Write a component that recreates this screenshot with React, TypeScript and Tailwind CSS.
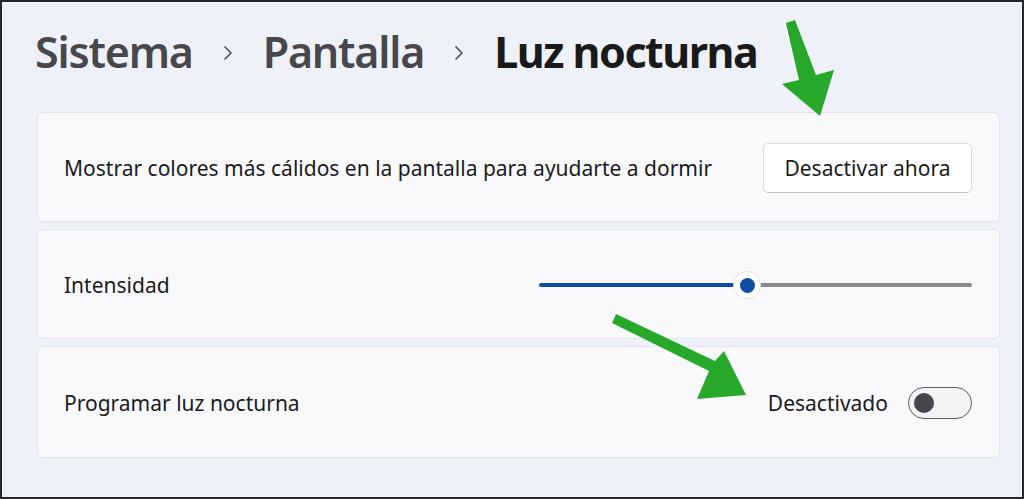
import React from "react";

function Chevron() {
  return (
    <svg width="10" height="16" viewBox="0 0 10 16" className="mx-[30px] mt-[3px]">
      <path d="M2 2 L8 8 L2 14" fill="none" stroke="#55555a" strokeWidth="1.7" strokeLinecap="round" strokeLinejoin="round" />
    </svg>
  );
}

function Card({ children, className = "" }: { children: React.ReactNode; className?: string }) {
  return (
    <div
      className={`flex items-center justify-between rounded-[6px] border border-[#e1e4ea] bg-[#f9f9fb] pl-[26px] pr-[27px] ${className}`}
    >
      {children}
    </div>
  );
}

export default function App() {
  return (
    <div
      className="relative h-[499px] w-[1024px] overflow-hidden border-2 border-[#26272b] bg-[#eef1f8] text-[#1b1b1b]"
      style={{ fontFamily: '"Noto Sans", "Open Sans", sans-serif' }}
    >
      {/* Breadcrumb */}
      <div className="flex h-[100px] items-center pl-[33px] pb-[2px] text-[43px] font-semibold leading-none tracking-[-1.2px]">
        <span className="text-[#47474c]">Sistema</span>
        <Chevron />
        <span className="text-[#47474c]">Pantalla</span>
        <Chevron />
        <span className="font-bold tracking-[-1.5px] text-[#1a1a1a]">Luz nocturna</span>
      </div>

      {/* Settings cards */}
      <div className="ml-[35px] mr-[22px] mt-[10px] flex flex-col gap-[7px] text-[21px]">
        <Card className="h-[110px]">
          <span className="pt-[3px]">Mostrar colores más cálidos en la pantalla para ayudarte a dormir</span>
          <button
            type="button"
            className="mt-[2px] h-[50px] w-[209px] rounded-[5px] border border-[#dcdcdc] border-b-[#c4c4c4] bg-white pt-[2px] text-[21px] text-[#1b1b1b]"
          >
            Desactivar ahora
          </button>
        </Card>

        <Card className="h-[110px]">
          <span className="pt-[3px]">Intensidad</span>
          <div className="relative mt-[2px] flex h-[28px] w-[433px] items-center">
            <div className="h-[4px] w-[208px] rounded-full bg-[#0f4ea6]" />
            <div className="h-[4px] flex-1 rounded-full bg-[#8a8a8a]" />
            <div className="absolute left-[194px] top-0 flex h-[28px] w-[28px] items-center justify-center rounded-full border border-[#e2e2e2] bg-white">
              <div className="h-[15px] w-[15px] rounded-full bg-[#0f4ea6]" />
            </div>
          </div>
        </Card>

        <Card className="h-[112px]">
          <span className="pt-[3px]">Programar luz nocturna</span>
          <div className="flex items-center gap-[20px]">
            <span className="pt-[3px]">Desactivado</span>
            <div className="mt-[2px] flex h-[32px] w-[64px] items-center rounded-full border-[1.5px] border-[#5e5e62] bg-[#f3f3f5] pl-[5px]">
              <div className="h-[20px] w-[20px] rounded-full bg-[#45454b]" />
            </div>
          </div>
        </Card>
      </div>

      {/* Annotation arrows */}
      <svg className="pointer-events-none absolute left-0 top-0" width="1024" height="499">
        <g fill="#27a82a">
          <polygon points="784,21 793,18 814,73 832,68 818,114 780,82 797,78" />
          <polygon points="610,321 614,312 713,359 722,349 744,393 695,397 707,369" />
        </g>
      </svg>
    </div>
  );
}
